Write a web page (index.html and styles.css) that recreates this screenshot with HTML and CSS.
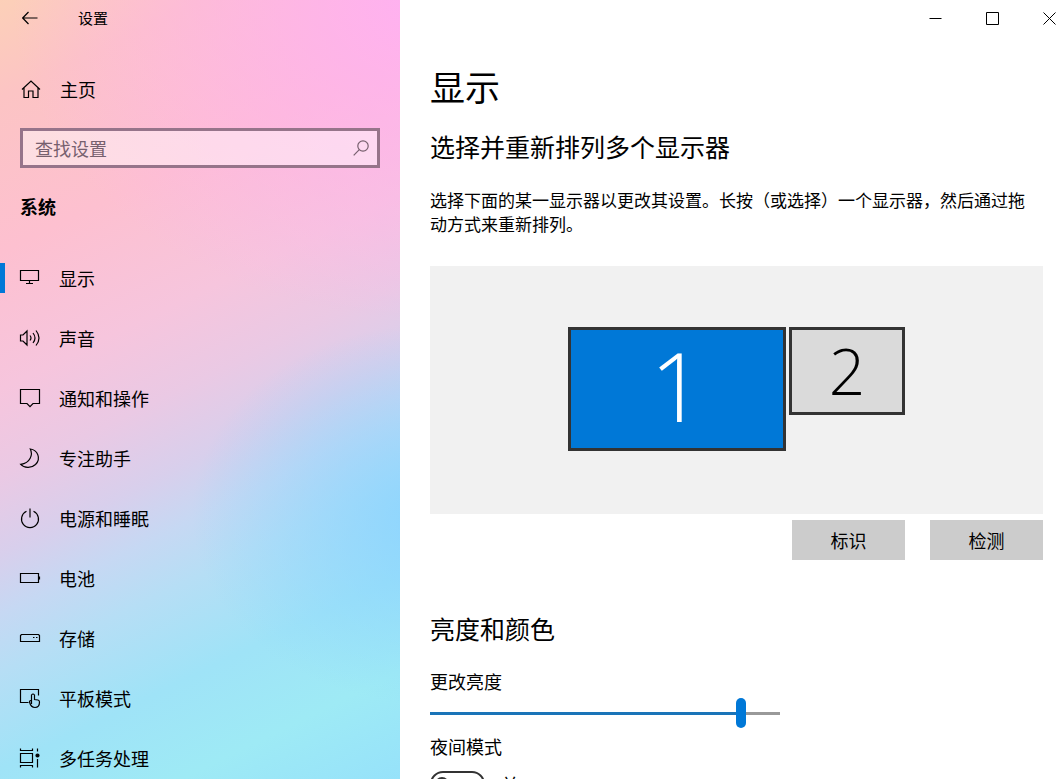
FILE: index.html
```html
<!DOCTYPE html>
<html lang="zh-CN">
<head>
<meta charset="utf-8">
<meta name="viewport" content="width=device-width, initial-scale=1">
<title>设置</title>
<link rel="stylesheet" href="styles.css">
</head>
<body>
<div id="settings">
  <aside id="sidebar">
    <header class="title-bar">
      <button class="back" aria-label="返回">
        <svg width="16" height="14" viewBox="0 0 16 14"><path d="M.5 7H15.500M6.500 1L.7 7l5.800 6"/></svg>
      </button>
      <span>设置</span>
    </header>
    <a class="home" href="#">
      <svg width="22" height="22" viewBox="0 0 22 22"><path d="M2 11.500L11 3l9 8.500M4 10v9.500h4.500V13h4.500v6.500H18V10"/></svg>
      <span>主页</span>
    </a>
    <form class="search">
      <input type="text" aria-label="查找设置" placeholder="查找设置">
      <button type="button" aria-label="搜索">
        <svg width="16" height="16" viewBox="0 0 16 16"><circle cx="10" cy="6" r="5.200"/><path d="M6.300 9.700L.7 15.300"/></svg>
      </button>
    </form>
    <h2>系统</h2>
    <nav>
      <a class="active" href="#">
        <svg width="22" height="22" viewBox="0 0 22 22"><path d="M1.500 3.500h18v10h-18zM10.500 13.500v3M7 16.500h7"/></svg>
        <span>显示</span>
      </a>
      <a href="#">
        <svg width="22" height="22" viewBox="0 0 22 22"><path d="M1.500 8v6h2.500l4 4V4L4 8zM11 8.500q2 2.500 0 5M14 6q4 5 0 10M17 3.500q6 7.500 0 15"/></svg>
        <span>声音</span>
      </a>
      <a href="#">
        <svg width="22" height="22" viewBox="0 0 22 22"><path d="M1.500 2.500h19v14H14l-3 3.200-3-3.200H1.500z"/></svg>
        <span>通知和操作</span>
      </a>
      <a href="#">
        <svg width="22" height="22" viewBox="0 0 22 22"><path d="M11.300 2C14 7.500 11.500 16 1.700 17.300 5 21 12 21.800 16.500 17.500 22.500 11.500 18.500 3 11.300 2z"/></svg>
        <span>专注助手</span>
      </a>
      <a href="#">
        <svg width="22" height="22" viewBox="0 0 22 22"><path d="M11 1.500v9M7.500 4.300a8.500 8.500 0 1 0 7 0"/></svg>
        <span>电源和睡眠</span>
      </a>
      <a href="#">
        <svg width="22" height="22" viewBox="0 0 22 22"><path d="M1.500 6.500h18v9h-18zM20.500 9.500v3"/></svg>
        <span>电池</span>
      </a>
      <a href="#">
        <svg width="22" height="22" viewBox="0 0 22 22"><path d="M2.500 7.500h17l1 1v6h-19v-6zM14 10.500h1.500M17 10.500h1.500"/></svg>
        <span>存储</span>
      </a>
      <a href="#">
        <svg width="22" height="22" viewBox="0 0 22 22"><path d="M9.500 15.500h-8v-13h18v6M12.500 14V8q1.500-2 3 0v4.500l3.500.5q1.500.5 1.500 2c0 4-2 5.500-4.500 5.500-3 0-4.500-1.500-5.500-5.500q0-2 2-1v3"/></svg>
        <span>平板模式</span>
      </a>
      <a href="#">
        <svg width="22" height="22" viewBox="0 0 22 22"><path d="M1.500 6.500h12v9h-12zM1.500 1.500v2h12v-2M1.500 20.500v-2h12v2M18.500 1.500v3M18.500 12v8.500"/><circle cx="18.500" cy="8.500" r="1.500" fill="#000"/></svg>
        <span>多任务处理</span>
      </a>
    </nav>
  </aside>

  <main id="content">
    <div class="window-controls">
      <button aria-label="最小化"><svg width="13" height="13" viewBox="0 0 13 13"><path d="M.5 6.500h12"/></svg></button>
      <button aria-label="最大化"><svg width="13" height="13" viewBox="0 0 13 13"><path d="M.5.5h12v12H.5z"/></svg></button>
      <button aria-label="关闭"><svg width="13" height="13" viewBox="0 0 13 13"><path d="M.5.5l12 12M12.500.5l-12 12"/></svg></button>
    </div>

    <h1>显示</h1>
    <h2>选择并重新排列多个显示器</h2>
    <p>选择下面的某一显示器以更改其设置。长按（或选择）一个显示器，然后通过拖动方式来重新排列。</p>

    <div class="monitors">
      <button class="monitor primary">1</button>
      <button class="monitor">2</button>
    </div>
    <div class="actions">
      <button>标识</button>
      <button>检测</button>
    </div>

    <section>
      <h2>亮度和颜色</h2>
      <label for="brightness">更改亮度</label>
      <input type="range" id="brightness" min="0" max="100" value="90" style="--level: 90%">
      <label for="night">夜间模式</label>
      <div class="toggle">
        <input type="checkbox" id="night">
        <span>关</span>
      </div>
    </section>
  </main>
</div>
</body>
</html>
```
FILE: styles.css
```css
* {
  box-sizing: border-box;
}
body, html {
  margin: 0;
  height: 100%;
  overflow: hidden;
  font-family: 'Noto Sans CJK SC', sans-serif;
  font-size: 18px;
  line-height: 24px;
  background-color: #fff;
  color: #000;
}
h1, h2, p {
  margin: 0;
  font-weight: normal;
}
a {
  color: inherit;
  text-decoration: none;
}
button, input {
  margin: 0;
  padding: 0;
  border: 0;
  background: none;
  color: inherit;
  font: inherit;
}
svg {
  display: block;
  flex: none;
  fill: none;
  stroke: #000;
  stroke-width: 1.2;
}
#settings {
  display: flex;
  height: 100vh;
}

/* left pane */
#sidebar {
  flex: 0 0 400px;
  overflow: hidden;
  background:
    radial-gradient(ellipse 420px 320px at 108% 0%, #ffb0f2, rgba(255, 176, 242, 0)),
    radial-gradient(ellipse 240px 190px at 108% 66%, rgba(138, 212, 255, 0.9), rgba(138, 212, 255, 0)),
    linear-gradient(154deg, #fcd0b8 0%, #fcc4c4 10%, #fdc0d0 26%, #f6c5dd 40%, #eac9e4 49%, #d8cfec 57%, #c6d8f3 63%, #b6def5 69%, #9fe3f7 79%, #9eeaf5 89%, #96e2fa 100%);
}
.title-bar {
  display: flex;
  align-items: center;
  height: 36px;
  padding-left: 22px;
  font-size: 15px;
}
.back {
  width: 56px;
}
.home {
  display: flex;
  align-items: center;
  gap: 18px;
  height: 40px;
  margin-top: 33px;
  padding-left: 20px;
}
.search {
  display: flex;
  align-items: center;
  height: 40px;
  margin: 19px 20px 0;
  padding: 0 8px 0 12px;
  border: 3px solid #96748a;
  background-color: rgba(255, 255, 255, 0.45);
}
.search input {
  flex: 1;
  min-width: 0;
  outline: none;
}
.search input::placeholder {
  color: #77606e;
  opacity: 1;
}
.search svg {
  stroke: #77606e;
}
#sidebar h2 {
  margin: 26px 20px 30px;
  font-size: 18px;
  font-weight: bold;
}
nav a {
  position: relative;
  display: flex;
  align-items: center;
  gap: 18px;
  height: 60px;
  padding-left: 19px;
}
nav .active::before {
  content: '';
  position: absolute;
  left: 0;
  width: 5px;
  height: 30px;
  background-color: #0078d7;
}

/* right pane */
#content {
  flex: 1;
  min-width: 0;
  overflow: hidden;
  padding: 0 21px 0 30px;
}
.window-controls {
  display: flex;
  justify-content: flex-end;
  gap: 27px;
  height: 36px;
  margin-right: -21px;
}
.window-controls button {
  display: grid;
  place-items: center;
  width: 30px;
}
.window-controls svg {
  stroke-width: 1;
}
h1 {
  margin-top: 26px;
  font-size: 35px;
  line-height: 48px;
}
#content h2 {
  margin-top: 20px;
  font-size: 25px;
  line-height: 32px;
}
p {
  margin-top: 26px;
  padding-right: 16px;
  font-size: 17px;
}
.monitors {
  display: flex;
  justify-content: center;
  align-items: flex-start;
  gap: 3px;
  height: 248px;
  margin-top: 30px;
  padding-top: 61px;
  background-color: #f1f1f1;
}
.monitor {
  width: 116px;
  height: 88px;
  border: 3px solid #333;
  background-color: #dadada;
  font-family: 'Open Sans', sans-serif;
  font-size: 64px;
  font-weight: 300;
  line-height: 82px;
}
.monitor.primary {
  width: 218px;
  height: 124px;
  padding-bottom: 8px;
  background-color: #0078d7;
  color: #fff;
  font-size: 95px;
  line-height: 110px;
}
.actions {
  display: flex;
  justify-content: flex-end;
  gap: 25px;
  margin-top: 6px;
}
.actions button {
  width: 113px;
  height: 40px;
  background-color: #ccc;
}
section {
  margin-top: 52px;
}
label {
  display: block;
}
section h2 + label {
  margin-top: 25px;
}
input[type=range] {
  appearance: none;
  display: block;
  width: 350px;
  max-width: 100%;
  height: 30px;
  margin: 5px 0 6px;
}
input[type=range]::-webkit-slider-runnable-track {
  height: 3px;
  background: linear-gradient(to right, #1a74b8 var(--level), #999 var(--level));
}
input[type=range]::-webkit-slider-thumb {
  appearance: none;
  width: 10px;
  height: 30px;
  margin-top: -14px;
  border-radius: 5px;
  background-color: #0078d7;
}
.toggle {
  display: flex;
  align-items: center;
  gap: 16px;
  margin-top: 13px;
}
.toggle input {
  appearance: none;
  display: flex;
  align-items: center;
  width: 55px;
  height: 26px;
  padding-left: 3px;
  border: 2px solid #333;
  border-radius: 13px;
}
.toggle input::before {
  content: '';
  width: 14px;
  height: 14px;
  border-radius: 50%;
  background-color: #333;
}
```
